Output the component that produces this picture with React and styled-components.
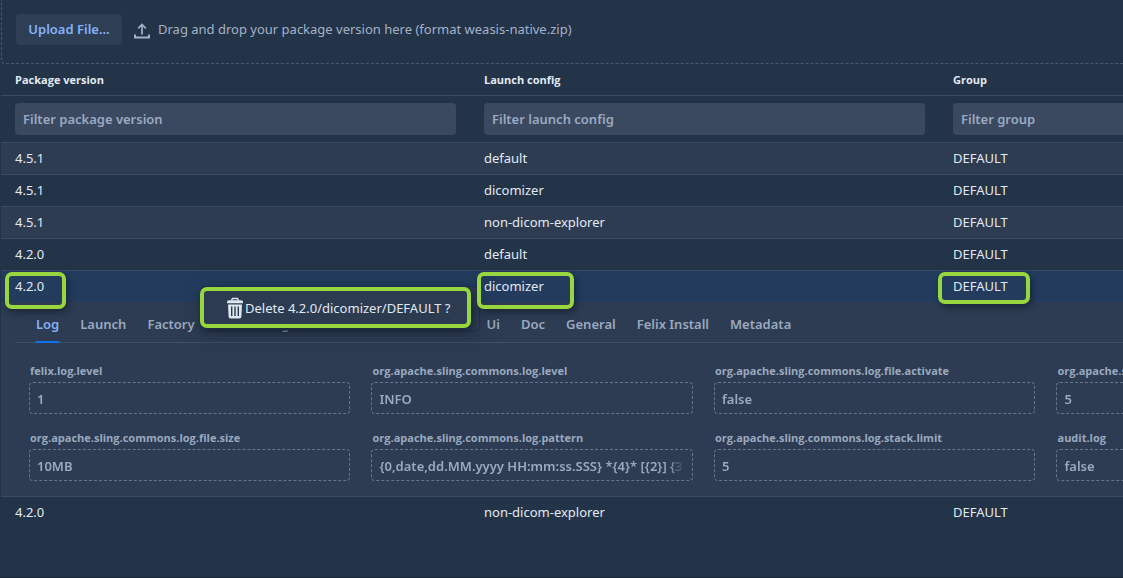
import React from "react";
import styled, { createGlobalStyle, css } from "styled-components";

const Global = createGlobalStyle`
  *, *::before, *::after { box-sizing: border-box; }
  body {
    margin: 0;
    background: #233348;
    color: #e2e9f2;
    font: 13px/20px "Noto Sans", "Open Sans", sans-serif;
  }
  button, input { font: inherit; color: inherit; }
`;

const Page = styled.main`
  min-height: 100vh;
  padding-left: 1px;
  overflow: hidden;
  border-bottom: 1px solid #1c2a3d;
`;

const Content = styled.div`
  width: 125.4%;
`;

const Upload = styled.section`
  display: flex;
  align-items: center;
  height: 64px;
  padding: 0 14px 5px;
  border: dashed #4a5a70;
  border-width: 0 1px 1px;
  border-radius: 0 0 4px 4px;
`;

const UploadButton = styled.button`
  width: 106px;
  height: 31px;
  padding: 0;
  border: 0;
  border-radius: 4px;
  background: #2e3e55;
  color: #84b3fa;
  font-weight: 600;
`;

const DropHint = styled.span`
  display: flex;
  align-items: flex-end;
  gap: 8px;
  margin-left: 12px;
  color: #a3b2c7;
`;

const Table = styled.table`
  width: 100%;
  table-layout: fixed;
  border-collapse: separate;
  border-spacing: 0;
`;

const HeadCell = styled.th`
  height: 32px;
  padding: 0 14px;
  border-bottom: 1px solid #3a4a60;
  text-align: left;
  font-family: "Open Sans", sans-serif;
  font-size: 11px;
  font-weight: 700;
`;

const FilterCell = styled.td`
  height: 47px;
  padding: 0 14px;
  border-bottom: 1px solid #3a4a60;
`;

const Filter = styled.input`
  display: block;
  width: 100%;
  height: 32px;
  padding: 0 8px;
  border: 0;
  border-radius: 4px;
  background: #3a495f;
  font-weight: 600;
  &::placeholder { color: #9baac1; opacity: 1; }
`;

const Row = styled.tr`
  background: ${(p) => (p.$selected ? "#233c5e" : p.$shaded ? "#2d3c51" : "#233348")};
`;

const Cell = styled.td`
  position: relative;
  height: ${(p) => (p.$plain ? "31px" : "32px")};
  padding: 0 14px 2px;
  border-bottom: ${(p) => (p.$plain ? "0" : "1px solid #3a4a60")};
`;

const ring = css`
  border: 4px solid #97d63f;
  border-radius: 7px;
  box-shadow: 2px 3px 7px rgba(8, 16, 30, 0.5);
`;

const Highlight = styled.span`
  ${ring}
  position: absolute;
  z-index: 3;
  top: 1px;
  left: ${(p) => p.$left}px;
  width: ${(p) => p.$width}px;
  height: ${(p) => p.$height}px;
  pointer-events: none;
`;

const Menu = styled.div`
  position: absolute;
  z-index: 2;
  top: 16px;
  left: 201px;
  width: 277px;
  height: 43px;
  border-radius: 4px;
  background: #2c3b50;
  box-shadow: 0 4px 24px rgba(12, 22, 38, 0.25), 0 0 0 1px rgba(20, 32, 50, 0.25);
`;

const MenuItem = styled.button`
  ${ring}
  display: flex;
  align-items: center;
  gap: 1px;
  width: 271px;
  height: 41px;
  margin-left: -2px;
  padding: 0 0 0 22px;
  background: transparent;
  white-space: nowrap;
`;

const DetailCell = styled.td`
  height: 195px;
  padding: 0;
  vertical-align: top;
  background: #2d3c52;
  border-bottom: 1px solid #3a4a60;
`;

const Tabs = styled.div`
  display: flex;
  height: 41px;
  margin: 0 14px;
  padding-left: 20px;
  gap: 19px;
  border-bottom: 1px solid #3f4f65;
`;

const Tab = styled.button`
  position: relative;
  flex: none;
  min-width: ${(p) => p.$min || 0}px;
  padding: 3px 1px 0;
  border: 0;
  background: none;
  color: ${(p) => (p.$active ? "#84b0f2" : "#9aa9bf")};
  font-weight: 600;
  text-align: left;
  &::after {
    content: "";
    position: absolute;
    left: 0;
    right: 0;
    bottom: -1px;
    height: 2px;
    border-radius: 2px 2px 0 0;
    background: ${(p) => (p.$active ? "#1070ee" : "transparent")};
  }
`;

const Fields = styled.div`
  display: grid;
  grid-template-columns: repeat(4, minmax(0, 1fr));
  gap: 15px 21px;
  padding: 19px 30px 0 28px;
`;

const Field = styled.label`
  display: flex;
  flex-direction: column;
  gap: 2px;
  color: #9aa9bf;
  font-family: "Open Sans", sans-serif;
  font-size: 11px;
  line-height: 18px;
  font-weight: 700;
`;

const FieldName = styled.span`
  padding-left: 1px;
`;

const ValueBox = styled.span`
  display: block;
  padding: 0 8px 0 7px;
  border: 1px dashed #66758b;
  border-radius: 4px;
`;

const Value = styled.input`
  display: block;
  width: 100%;
  height: 30px;
  padding: 2px 0 0;
  border: 0;
  background: transparent;
  font-family: "Noto Sans", "Open Sans", sans-serif;
  font-size: 13px;
  font-weight: 600;
  outline: 0;
  mask-image: linear-gradient(to left, transparent, #000 16px);
`;

const rows = [
  ["4.5.1", "default"],
  ["4.5.1", "dicomizer"],
  ["4.5.1", "non-dicom-explorer"],
  ["4.2.0", "default"],
  ["4.2.0", "dicomizer"],
  ["4.2.0", "non-dicom-explorer"],
];

const tabs = [
  ["Log"], ["Launch"], ["Factory"], ["Felix Config", 252], ["Ui"], ["Doc"],
  ["General"], ["Felix Install"], ["Metadata"],
];

const fields = [
  ["felix.log.level", "1"],
  ["org.apache.sling.commons.log.level", "INFO"],
  ["org.apache.sling.commons.log.file.activate", "false"],
  ["org.apache.sling.commons.log.file.number", "5"],
  ["org.apache.sling.commons.log.file.size", "10MB"],
  ["org.apache.sling.commons.log.pattern", "{0,date,dd.MM.yyyy HH:mm:ss.SSS} *{4}* [{2}] {3} {5}"],
  ["org.apache.sling.commons.log.stack.limit", "5"],
  ["audit.log", "false"],
];

const UploadIcon = () => (
  <svg width="16" height="16" viewBox="0 0 16 16" fill="none" stroke="currentColor" aria-hidden="true">
    <path d="M8 11.500V1.500M4.200 5.300L8 1.500l3.800 3.800" strokeWidth="1.700" />
    <path d="M1 11.500V14.500h14v-3" strokeWidth="2" />
  </svg>
);

const TrashIcon = () => (
  <svg width="18" height="22" viewBox="0 0 18 22" fill="none" aria-hidden="true">
    <path d="M5.500 3.500l1-2h5l1 2" stroke="#dde5ef" strokeWidth="1.500" />
    <path d="M1 6.300V5c0-1 .8-1.700 2-1.700h12c1.200 0 2 .7 2 1.700v1.300z" fill="#dde5ef" />
    <path d="M2 7.600h14l-.6 12c-.1 1.200-.8 1.900-2 1.900H4.600c-1.200 0-1.900-.7-2-1.900z" fill="#dde5ef" />
    <path d="M5.700 9.500v9.500M9 9.500v9.500M12.300 9.500v9.500" stroke="#2c3b50" strokeWidth="1.400" />
  </svg>
);

function Details() {
  return (
    <tr>
      <DetailCell colSpan={3}>
        <Tabs role="tablist">
          {tabs.map(([name, min], i) => (
            <Tab key={name} role="tab" aria-selected={i === 0} $active={i === 0} $min={min}>{name}</Tab>
          ))}
        </Tabs>
        <Fields>
          {fields.map(([name, value]) => (
            <Field key={name}>
              <FieldName>{name}</FieldName>
              <ValueBox>
                <Value readOnly defaultValue={value} />
              </ValueBox>
            </Field>
          ))}
        </Fields>
      </DetailCell>
    </tr>
  );
}

export default function App() {
  return (
    <Page>
      <Global />
      <Content>
        <Upload>
          <UploadButton>Upload File...</UploadButton>
          <DropHint>
            <UploadIcon />
            Drag and drop your package version here (format weasis-native.zip)
          </DropHint>
        </Upload>
        <Table>
          <thead>
            <tr>
              <HeadCell>Package version</HeadCell>
              <HeadCell>Launch config</HeadCell>
              <HeadCell>Group</HeadCell>
            </tr>
            <tr>
              {["package version", "launch config", "group"].map((name) => (
                <FilterCell key={name}>
                  <Filter aria-label={`Filter ${name}`} placeholder={`Filter ${name}`} />
                </FilterCell>
              ))}
            </tr>
          </thead>
          <tbody>
            {rows.map(([version, config], i) => {
              const selected = i === 4;
              const plain = i >= 4;
              return (
                <React.Fragment key={i}>
                  <Row $selected={selected} $shaded={i % 2 === 0}>
                    <Cell $plain={plain}>
                      {version}
                      {selected && <Highlight $left={4} $width={61} $height={37} />}
                      {selected && (
                        <Menu role="menu">
                          <MenuItem role="menuitem">
                            <TrashIcon />
                            <span>Delete 4.2.0/dicomizer/DEFAULT ?</span>
                          </MenuItem>
                        </Menu>
                      )}
                    </Cell>
                    <Cell $plain={plain}>
                      {config}
                      {selected && <Highlight $left={7} $width={97} $height={37} />}
                    </Cell>
                    <Cell $plain={plain}>
                      DEFAULT
                      {selected && <Highlight $left={-1} $width={92} $height={32} />}
                    </Cell>
                  </Row>
                  {selected && <Details />}
                </React.Fragment>
              );
            })}
          </tbody>
        </Table>
      </Content>
    </Page>
  );
}
